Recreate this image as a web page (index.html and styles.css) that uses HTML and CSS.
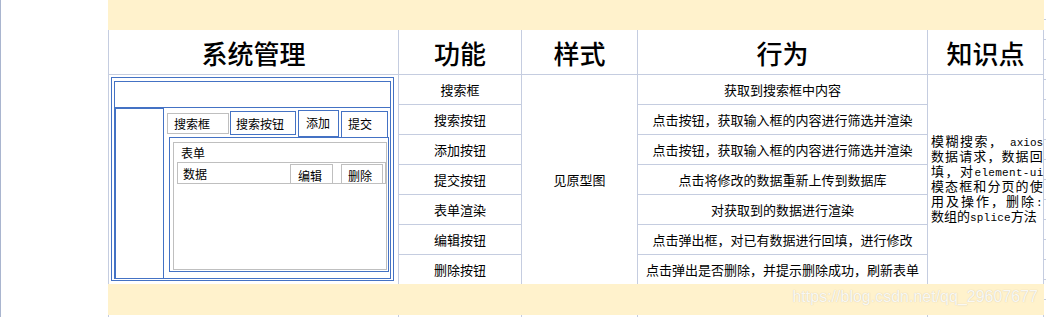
FILE: index.html
```html
<!DOCTYPE html>
<html lang="zh-CN">
<head>
<meta charset="utf-8">
<title>系统管理</title>
<link rel="stylesheet" href="styles.css">
</head>
<body>
<div class="page">
  <div class="gutter"></div>
  <div class="sheet">
    <div class="band"></div>
    <div class="grid">
      <div class="hd">系统管理</div>
      <div class="hd">功能</div>
      <div class="hd">样式</div>
      <div class="hd">行为</div>
      <div class="hd">知识点</div>

      <div class="cell proto">
        <div class="wf-outer">
          <div class="wf-frame">
            <div class="wf-head"></div>
            <div class="wf-body">
              <div class="wf-side"></div>
              <div class="wf-main">
                <div class="wf-tools">
                  <div class="wf-field">搜索框</div>
                  <div class="wf-btn wf-search">搜索按钮</div>
                  <div class="wf-btn wf-add">添加</div>
                  <div class="wf-btn wf-submit">提交</div>
                </div>
                <div class="wf-table">
                  <div class="wf-grey">
                    <div class="wf-label">表单</div>
                    <div class="wf-row">
                      <div class="wf-data">数据</div>
                      <div class="wf-op wf-edit">编辑</div>
                      <div class="wf-op wf-del">删除</div>
                    </div>
                  </div>
                </div>
              </div>
            </div>
          </div>
        </div>
      </div>
      <div class="cell">搜索框</div>
      <div class="cell span">见原型图</div>
      <div class="cell">获取到搜索框中内容</div>
      <div class="cell span know">
        <div class="know-text">
          <div class="kl l1">模糊搜索，<span class="en"> axios</span></div>
          <div class="kl mid">数据请求，数据回</div>
          <div class="kl tight">填，对<span class="en en-wide">element-ui</span></div>
          <div class="kl mid">模态框和分页的使</div>
          <div class="kl wide">用及操作，删除<span class="en">:</span></div>
          <div class="kl">数组的<span class="en en-mid">splice</span>方法</div>
        </div>
      </div>

      <div class="cell">搜索按钮</div>
      <div class="cell">点击按钮，获取输入框的内容进行筛选并渲染</div>
      <div class="cell">添加按钮</div>
      <div class="cell">点击按钮，获取输入框的内容进行筛选并渲染</div>
      <div class="cell">提交按钮</div>
      <div class="cell">点击将修改的数据重新上传到数据库</div>
      <div class="cell">表单渲染</div>
      <div class="cell">对获取到的数据进行渲染</div>
      <div class="cell">编辑按钮</div>
      <div class="cell">点击弹出框，对已有数据进行回填，进行修改</div>
      <div class="cell">删除按钮</div>
      <div class="cell">点击弹出是否删除，并提示删除成功，刷新表单</div>
    </div>
    <div class="band band-bottom"><span class="watermark">https://blog.csdn.net/qq_29607677</span></div>
    <div class="tail">
      <div></div><div></div><div></div><div></div><div></div>
    </div>
  </div>
  <div class="stub"></div>
</div>
</body>
</html>
```

FILE: styles.css
```css
html, body {
  margin: 0;
  padding: 0;
  background: #fff;
}
body {
  font-family: "Noto Sans CJK SC", sans-serif;
  color: #000;
}
.page {
  display: flex;
  width: 1046px;
  height: 317px;
  overflow: hidden;
  background: #fff;
}
.gutter {
  flex: none;
  width: 108px;
  box-sizing: border-box;
  border-left: 1px solid #a9b5cf;
}
.sheet {
  flex: none;
  width: 936px;
  display: flex;
  flex-direction: column;
}
.band {
  flex: none;
  height: 30px;
  background: #fff2cc;
}
.grid {
  flex: none;
  display: grid;
  grid-template-columns: 289px 122px 115px 289px 115px;
  grid-template-rows: 44px repeat(7, 29px);
  gap: 1px;
  padding: 0 1px;
  background: #c5cde0;
}
.hd {
  background: #fff;
  display: flex;
  align-items: center;
  justify-content: center;
  font-size: 26px;
  font-weight: 500;
  padding-top: 1px;
}
.cell {
  background: #fff;
  display: flex;
  align-items: center;
  justify-content: center;
  font-size: 13px;
  white-space: nowrap;
}
.span {
  grid-row: span 7;
}
.proto {
  grid-row: span 7;
  display: block;
  padding: 2px 0 0 2px;
}
.know {
  justify-content: flex-start;
  padding-left: 3px;
}
.know-text {
  width: 111px;
  flex: none;
  font-family: "Liberation Mono", "Noto Sans CJK SC", monospace;
  font-size: 13px;
  line-height: 15px;
}
.kl {
  height: 15px;
  line-height: 15px;
  white-space: nowrap;
}
.l1 {
  letter-spacing: 1.5px;
}
.wide {
  letter-spacing: 2px;
}
.mid {
  letter-spacing: 1.1px;
}
.tight {
  letter-spacing: 1.5px;
}
.en {
  font-size: 11px;
  letter-spacing: 0;
  line-height: 15px;
}
.en-wide {
  letter-spacing: 0.3px;
}
.en-mid {
  letter-spacing: 0.2px;
}

/* wireframe */
.wf-outer {
  width: 283px;
  height: 204px;
  box-sizing: border-box;
  border: 1px solid #4472c4;
  padding: 3px 2px 1px 2px;
}
.wf-frame {
  height: 100%;
  box-sizing: border-box;
  border: 1px solid #4472c4;
  display: flex;
  flex-direction: column;
}
.wf-head {
  flex: none;
  height: 25px;
  border-bottom: 1px solid #4472c4;
}
.wf-body {
  flex: 1;
  display: flex;
}
.wf-side {
  flex: none;
  width: 49px;
  box-sizing: border-box;
  border: 1px solid #4472c4;
  border-bottom: none;
}
.wf-main {
  flex: 1;
  display: flex;
  flex-direction: column;
  font-size: 12px;
}
.wf-tools {
  flex: none;
  height: 29px;
  display: flex;
  align-items: flex-start;
}
.wf-field {
  margin: 5px 0 0 3px;
  width: 62px;
  height: 21px;
  box-sizing: border-box;
  border: 1px solid #bfbfbf;
  padding-left: 6px;
  display: flex;
  align-items: center;
}
.wf-btn {
  box-sizing: border-box;
  border: 1px solid #4472c4;
  display: flex;
  align-items: center;
}
.wf-search {
  margin: 3px 0 0 1px;
  width: 66px;
  height: 24px;
  padding-left: 5px;
}
.wf-add {
  margin: 2px 0 0 2px;
  width: 41px;
  height: 27px;
  padding: 0 0 3px 7px;
}
.wf-submit {
  margin: 3px 0 0 2px;
  width: 47px;
  height: 26px;
  border-bottom: none;
  padding: 0 0 2px 6px;
}
.wf-table {
  flex: none;
  margin-left: 5px;
  width: 220px;
  height: 135px;
  box-sizing: border-box;
  border: 1px solid #4472c4;
  padding: 4px 1px 1px 3px;
}
.wf-grey {
  height: 100%;
  box-sizing: border-box;
  border: 1px solid #bfbfbf;
  display: flex;
  flex-direction: column;
}
.wf-label {
  flex: none;
  height: 19px;
  line-height: 19px;
  padding-left: 7px;
}
.wf-row {
  flex: none;
  margin-left: 3px;
  width: 209px;
  height: 22px;
  box-sizing: border-box;
  border: 1px solid #bfbfbf;
  display: flex;
  align-items: flex-end;
}
.wf-data {
  align-self: center;
  width: 112px;
  flex: none;
  box-sizing: border-box;
  padding-left: 5px;
}
.wf-op {
  flex: none;
  height: 19px;
  box-sizing: border-box;
  border: 1px solid #bfbfbf;
  border-bottom: none;
  padding-top: 2px;
  line-height: 17px;
}
.wf-edit {
  width: 43px;
  padding-left: 7px;
}
.wf-del {
  margin-left: 8px;
  width: 42px;
  padding-left: 6px;
}

/* bottom */
.band-bottom {
  height: 31px;
  position: relative;
}
.watermark {
  position: absolute;
  right: 6px;
  top: 4px;
  font-family: "Liberation Sans", Arial, sans-serif;
  font-size: 16px;
  line-height: 18px;
  color: rgba(255, 255, 255, 0.9);
  text-shadow: 0 0 1px rgba(140, 130, 110, 0.45);
  white-space: nowrap;
}
.tail {
  flex: none;
  display: grid;
  grid-template-columns: 289px 122px 115px 289px 115px;
  gap: 1px;
  padding: 0 1px;
  height: 2px;
  background: #c5cde0;
}
.tail div {
  background: #fff;
}
.stub {
  flex: none;
  width: 2px;
  background: repeating-linear-gradient(to bottom, #fff 0, #fff 19px, #c5cde0 19px, #c5cde0 20px);
}
```
